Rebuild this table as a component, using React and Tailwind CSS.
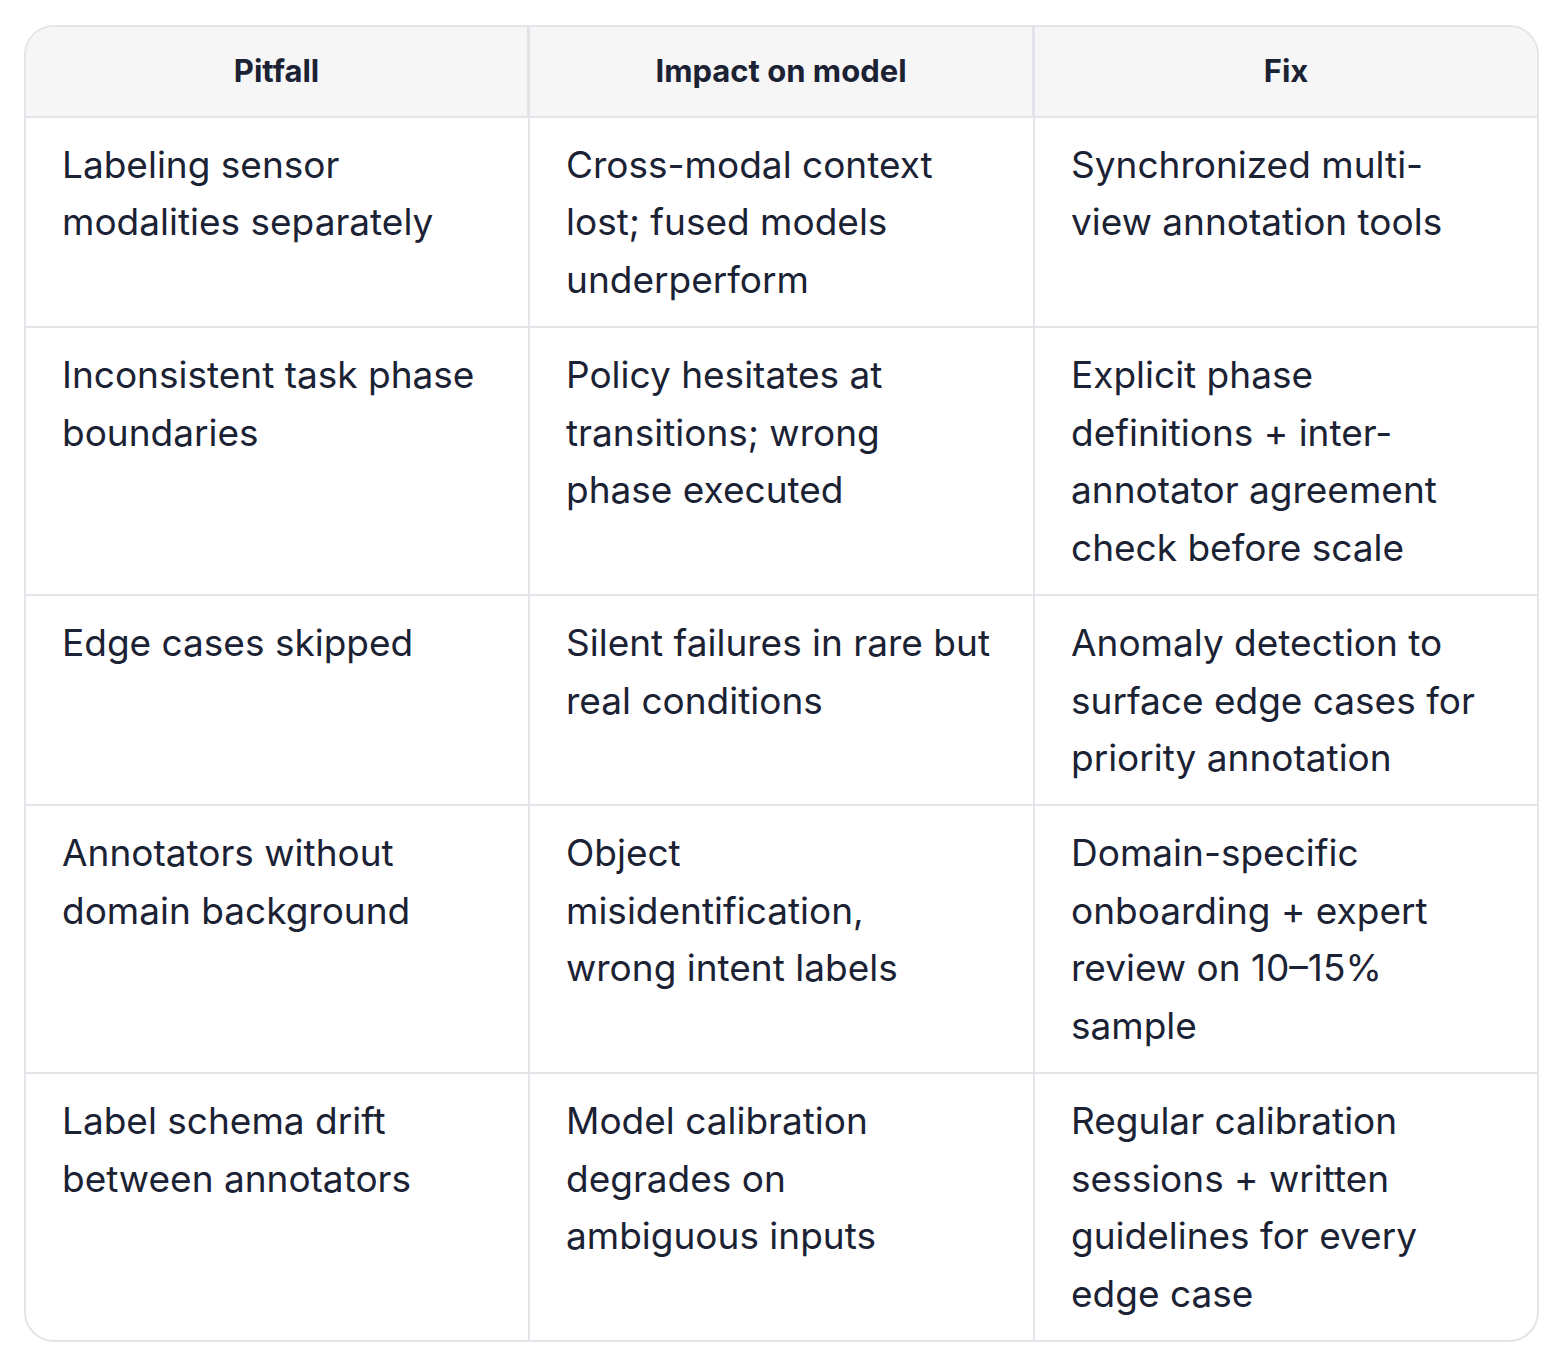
import React from "react";

const rows = [
  {
    pitfall: ["Labeling sensor", "modalities separately"],
    impact: ["Cross-modal context", "lost; fused models", "underperform"],
    fix: ["Synchronized multi-", "view annotation tools"],
  },
  {
    pitfall: ["Inconsistent task phase", "boundaries"],
    impact: ["Policy hesitates at", "transitions; wrong", "phase executed"],
    fix: ["Explicit phase", "definitions + inter-", "annotator agreement", "check before scale"],
  },
  {
    pitfall: ["Edge cases skipped"],
    impact: ["Silent failures in rare but", "real conditions"],
    fix: ["Anomaly detection to", "surface edge cases for", "priority annotation"],
  },
  {
    pitfall: ["Annotators without", "domain background"],
    impact: ["Object", "misidentification,", "wrong intent labels"],
    fix: ["Domain-specific", "onboarding + expert", "review on 10–15%", "sample"],
  },
  {
    pitfall: ["Label schema drift", "between annotators"],
    impact: ["Model calibration", "degrades on", "ambiguous inputs"],
    fix: ["Regular calibration", "sessions + written", "guidelines for every", "edge case"],
  },
];

const Cell = ({ lines, last }) => (
  <div
    className={`pl-[36px] pr-[30px] py-[17.75px] ${last ? "" : "border-r-2 border-[#e4e4ea]"}`}
  >
    {lines.map((l) => (
      <div key={l} className="whitespace-nowrap">
        {l}
      </div>
    ))}
  </div>
);

export default function App() {
  return (
    <div
      className="bg-white min-h-[1347px] pt-[25px] pl-[24px]"
      style={{ fontFamily: "Inter, 'Noto Sans', sans-serif" }}
    >
      <div className="w-[1515px] rounded-[30px] border-2 border-[#e4e4ea] overflow-hidden text-[#1b2234]">
        {/* Header */}
        <div className="grid grid-cols-[504px_505px_1fr] bg-[#f6f6f7] border-b-2 border-[#e4e4ea] h-[91px] text-[31px] font-bold">
          <div className="flex items-center justify-center border-r-[3px] border-[#e2e2e8]">Pitfall</div>
          <div className="flex items-center justify-center border-r-[3px] border-[#e2e2e8]">Impact on model</div>
          <div className="flex items-center justify-center">Fix</div>
        </div>

        {/* Body */}
        {rows.map((r, i) => (
          <div
            key={i}
            className={`grid grid-cols-[504px_505px_1fr] text-[37px] leading-[57.6px] ${
              i < rows.length - 1 ? "border-b-2 border-[#e4e4ea]" : ""
            }`}
          >
            <Cell lines={r.pitfall} />
            <Cell lines={r.impact} />
            <Cell lines={r.fix} last />
          </div>
        ))}
      </div>
    </div>
  );
}
